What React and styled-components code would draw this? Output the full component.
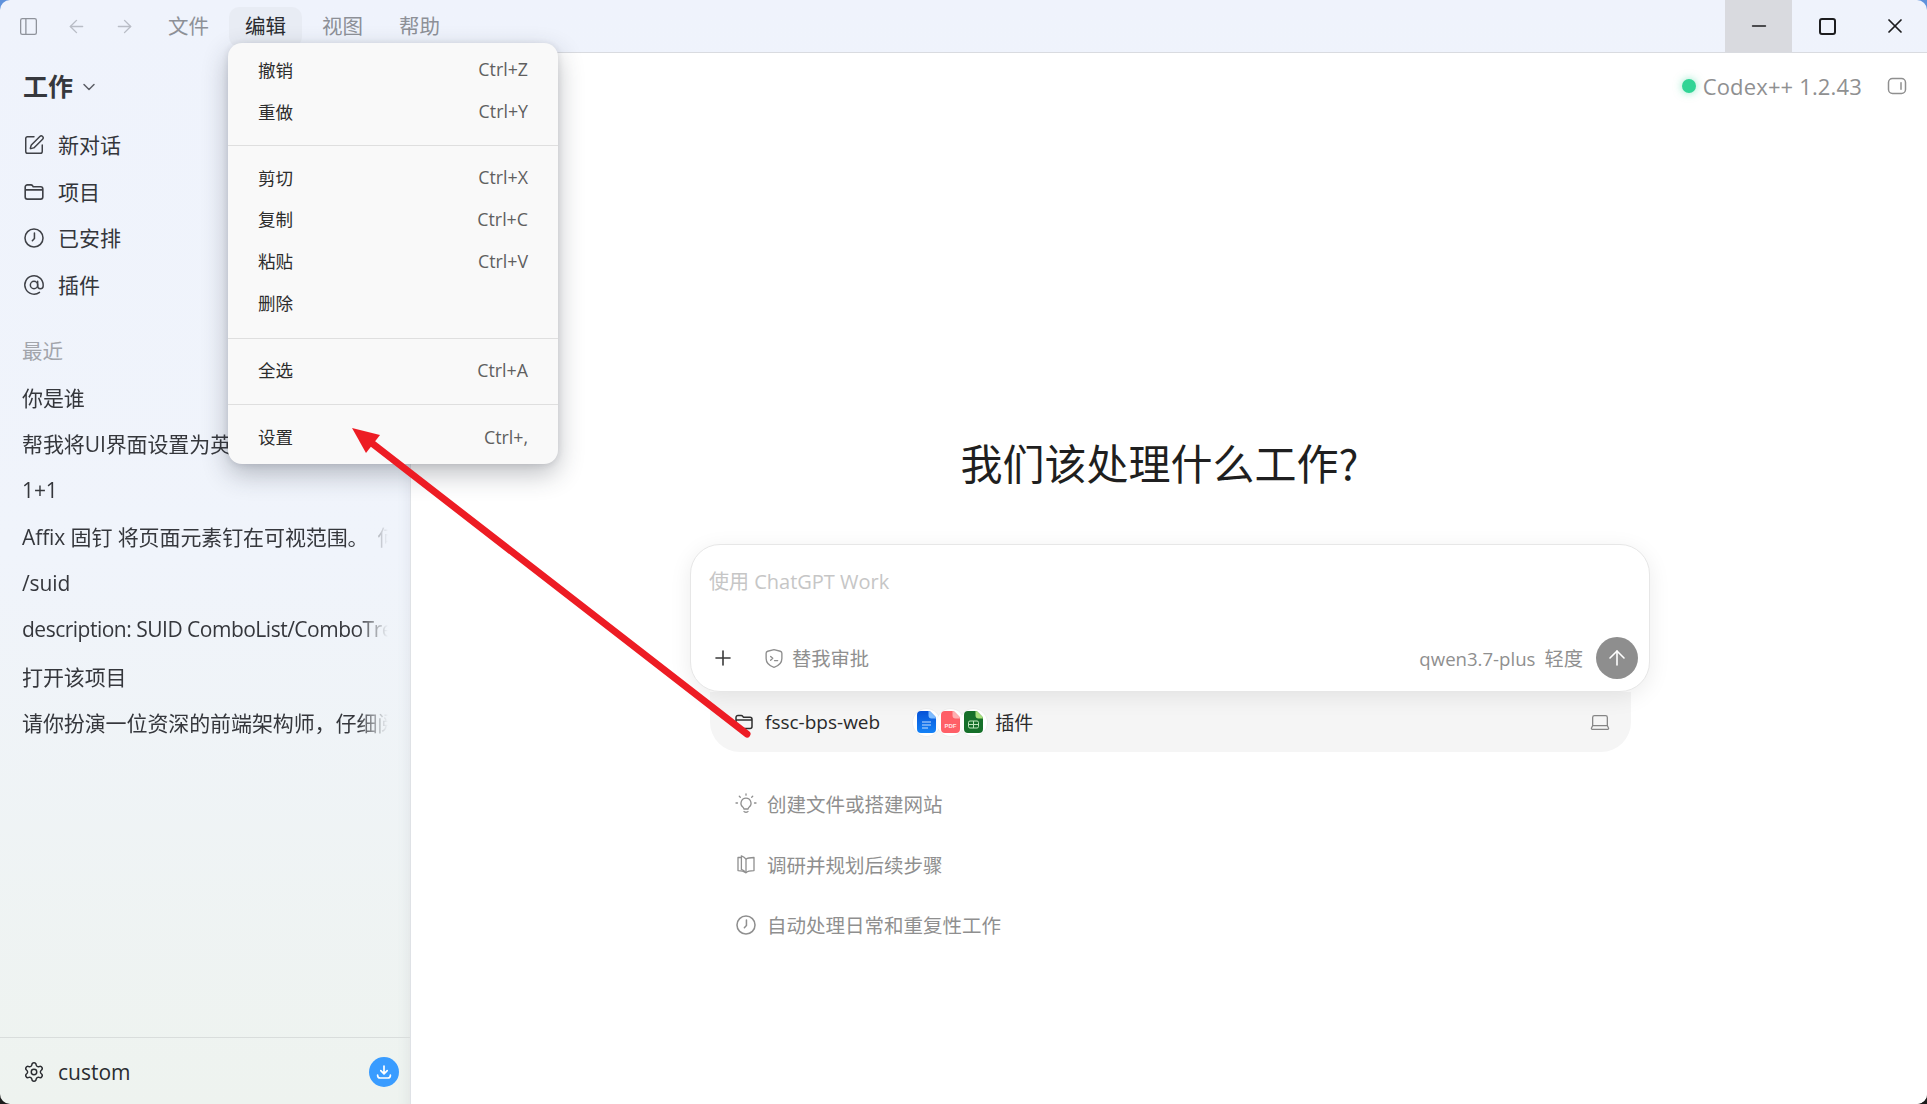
import React from 'react';
import styled, { createGlobalStyle } from 'styled-components';
import {
  ArrowLeft,
  ArrowRight,
  ArrowUp,
  AtSign,
  ChevronDown,
  Laptop,
  Minus,
  PanelLeft,
  Plus,
  Settings,
  SquarePen,
  X,
} from 'lucide-react';

const FONT = '"Open Sans", "Noto Sans CJK SC", sans-serif';

const GlobalStyle = createGlobalStyle`
  html, body, #root {
    margin: 0;
    padding: 0;
    height: 100%;
  }
  body {
    font-family: ${FONT};
    background: linear-gradient(180deg, #5f92dc 0, #5f92dc 50%, #1c1c1c 50%, #1c1c1c 100%);
    overflow: hidden;
  }
`;

// whole window, rounded corners let the desktop peek through
const Window = styled.div`
  position: relative;
  width: 100%;
  height: 100vh;
  display: flex;
  flex-direction: column;
  overflow: hidden;
  border-radius: 10px;
  background: linear-gradient(180deg, #eff3fc 0%, #f0f4fb 50%, #eef3ef 100%);
`;

const TitleBar = styled.div`
  height: 52px;
  flex-shrink: 0;
  display: flex;
  align-items: center;
`;

const BarIcon = styled.div`
  width: 48px;
  height: 52px;
  display: flex;
  align-items: center;
  justify-content: center;
  color: ${props => props.$color || '#b9bdc6'};
`;

const BarIcons = styled.div`
  display: flex;
  padding-left: 4px;
  margin-right: 4px;
`;

const MenuBar = styled.div`
  display: flex;
  gap: 4px;
  flex: 1;
`;

const MenuName = styled.div`
  width: 73px;
  height: 40px;
  margin-top: 2px;
  padding-bottom: 2px;
  box-sizing: border-box;
  border-radius: 10px;
  display: flex;
  align-items: center;
  justify-content: center;
  font-size: 20.5px;
  line-height: 28px;
  color: ${props => (props.$open ? '#2b2c30' : '#8d9097')};
  background: ${props => (props.$open ? '#e8ecf4' : 'transparent')};
`;

const WinButton = styled.div`
  width: ${props => props.$width || 67}px;
  height: 52px;
  margin-left: ${props => props.$gap || 0}px;
  display: flex;
  align-items: center;
  justify-content: center;
  color: #1d1d1f;
  background: ${props => (props.$hover ? '#d9dadf' : 'transparent')};
`;

const MaxGlyph = styled.div`
  width: 13px;
  height: 13px;
  border: 2px solid #1d1d1f;
  border-radius: 3px;
`;

const Body = styled.div`
  flex: 1;
  display: flex;
  min-height: 0;
`;

const Sidebar = styled.aside`
  width: 410px;
  flex-shrink: 0;
  display: flex;
  flex-direction: column;
  padding-top: 10px;
  box-sizing: border-box;
  box-shadow: inset -14px 0 14px -14px rgba(120, 130, 150, 0.14);
`;

const WorkHeader = styled.div`
  height: 46px;
  margin-bottom: 14px;
  padding-left: 23px;
  display: flex;
  align-items: center;
  gap: 6px;
  font-size: 25px;
  font-weight: 700;
  color: #36383d;

  svg {
    color: #5c5f66;
    margin-top: 3px;
  }
`;

const NavRow = styled.div`
  height: 46.5px;
  padding-left: 23px;
  display: flex;
  align-items: center;
  gap: 13px;
  font-size: 21px;
  color: #34363b;

  span {
    margin-top: -2px;
  }

  svg {
    flex-shrink: 0;
    color: #3f4147;
  }
`;

const RecentTitle = styled.div`
  height: 46.5px;
  margin-top: 19px;
  padding-left: 22px;
  display: flex;
  align-items: center;
  font-size: 20.5px;
  color: #a2a5ab;
`;

const RecentList = styled.div`
  flex: 1;
  min-height: 0;
`;

const RecentRow = styled.div`
  height: 46.5px;
  width: 388px;
  padding-left: 22px;
  box-sizing: border-box;
  display: flex;
  align-items: center;
  white-space: pre;
  overflow: hidden;
  font-size: 21px;
  letter-spacing: ${props => (props.$tight ? '-0.5px' : '-0.1px')};
  color: #35373c;
  -webkit-mask-image: linear-gradient(90deg, #000 358px, transparent 388px);
  mask-image: linear-gradient(90deg, #000 358px, transparent 388px);
`;

const SideFooter = styled.div`
  height: 67px;
  flex-shrink: 0;
  padding: 1px 11px 0 23px;
  border-top: 1px solid #d9dddc;
  box-sizing: border-box;
  display: flex;
  align-items: center;
  gap: 13px;
  font-size: 21px;
  color: #2a2c30;
`;

const FooterName = styled.span`
  flex: 1;
`;

const UpdateDot = styled.div`
  width: 30px;
  height: 30px;
  border-radius: 50%;
  background: #399cff;
  display: flex;
  align-items: center;
  justify-content: center;
`;

const Main = styled.main`
  flex: 1;
  min-width: 0;
  background: #fff;
  border-top: 1px solid #d9dbe0;
  border-left: 1px solid #dfe2e6;
  display: flex;
  flex-direction: column;
  align-items: center;
  padding-left: 2px;
  box-sizing: border-box;
`;

const VersionRow = styled.div`
  align-self: stretch;
  height: 66px;
  flex-shrink: 0;
  padding-right: 20px;
  display: flex;
  align-items: center;
  justify-content: flex-end;
  color: #8f9091;
`;

const GreenDot = styled.span`
  width: 14px;
  height: 14px;
  margin-right: 7px;
  border-radius: 50%;
  background: #31d495;
  box-shadow: 0 0 8px rgba(49, 212, 149, 0.55);
`;

const VersionText = styled.span`
  font-size: 22px;
  letter-spacing: 0.15px;
  margin-right: 25px;
`;

const Center = styled.div`
  width: 960px;
  margin-top: 313px;
`;

const Heading = styled.h1`
  margin: 0 21px 52px 0;
  height: 60px;
  text-align: center;
  font-family: "Noto Sans CJK SC", sans-serif;
  font-size: 42px;
  line-height: 60px;
  font-weight: 400;
  color: #1f1f20;
`;

const Composer = styled.div`
  position: relative;
  z-index: 1;
  height: 148px;
  padding: 0 11px 0 18px;
  box-sizing: border-box;
  display: flex;
  flex-direction: column;
  background: #fff;
  border: 1px solid #e7e7e7;
  border-radius: 30px;
  box-shadow: 0 5px 22px rgba(0, 0, 0, 0.08);
`;

const Placeholder = styled.div`
  height: 70px;
  display: flex;
  align-items: center;
  font-size: 20px;
  color: #c6c6c6;
`;

const ComposerBar = styled.div`
  flex: 1;
  display: flex;
  align-items: center;
  padding-top: 10px;
  color: #8f8f8f;
`;

const BarLabel = styled.span`
  font-size: 19.3px;
`;

const PlusSlot = styled.div`
  width: 26px;
  margin: 0 28px 0 1px;
  display: flex;
  justify-content: center;
  color: #3a3a3a;
`;

const ApproveIcon = styled.div`
  margin-right: 8px;
  display: flex;
`;

const Spacer = styled.div`
  flex: 1;
`;

const ModelName = styled.span`
  font-size: 18.6px;
  margin-right: 9px;
`;

const SendButton = styled.div`
  width: 42px;
  height: 42px;
  margin-left: 13px;
  border-radius: 50%;
  background: #8e8e8e;
  color: #fff;
  display: flex;
  align-items: center;
  justify-content: center;
`;

const Tray = styled.div`
  height: 60px;
  margin: 0 19px 0 20px;
  padding: 0 20px 0 24px;
  background: #f5f5f5;
  border-radius: 0 0 30px 30px;
  display: flex;
  align-items: center;
  font-size: 19px;
  color: #2a2a2a;
`;

const TrayFolder = styled.div`
  display: flex;
  margin-right: 11px;
`;

const AppBadges = styled.div`
  display: flex;
  margin: 0 8px 0 33px;
`;

const AppBadge = styled.div`
  width: 27px;
  height: 27px;
  margin-left: ${props => (props.$first ? 0 : -3.5)}px;
  border-radius: 50%;
  background: #fff;
  display: flex;
  align-items: center;
  justify-content: center;
  box-shadow: 0 0 0 1px rgba(0, 0, 0, 0.025);
`;

const LaptopSlot = styled.div`
  display: flex;
  color: #858585;
`;

const Suggestions = styled.div`
  margin-top: 21.5px;
  padding-left: 45px;
`;

const Suggestion = styled.div`
  height: 60.5px;
  display: flex;
  align-items: center;
  gap: 10px;
  font-size: 19.5px;
  color: #8f8f8f;

  svg {
    flex-shrink: 0;
  }
`;

// dropdown of the edit menu, floats over sidebar and main
const Dropdown = styled.div`
  position: absolute;
  left: 228px;
  top: 43px;
  width: 330px;
  z-index: 5;
  padding: 7px 0 5px;
  box-sizing: border-box;
  background: #f9f9f9;
  border-radius: 14px;
  box-shadow: 0 10px 26px rgba(40, 45, 60, 0.3), 0 1px 6px rgba(40, 45, 60, 0.12);
`;

const DropRow = styled.div`
  height: 41.7px;
  padding: 0 30px 3px 30px;
  box-sizing: border-box;
  display: flex;
  align-items: center;
  justify-content: space-between;
  font-size: 17.5px;
  color: #2d2d2d;
`;

const Shortcut = styled.span`
  font-size: 17.8px;
  color: #5f5f5f;
`;

const DropLine = styled.div`
  height: 1px;
  margin: ${props => props.$top}px 0 12px;
  background: #dfdfdf;
`;

const ArrowLayer = styled.svg`
  position: absolute;
  inset: 0;
  width: 100%;
  height: 100%;
  z-index: 6;
  pointer-events: none;
`;

const recents = [
  { text: '你是谁' },
  { text: '帮我将UI界面设置为英文' },
  { text: '1+1' },
  { text: 'Affix 固钉 将页面元素钉在可视范围。\u2009 何时使用' },
  { text: '/suid' },
  { text: 'description: SUID ComboList/ComboTree', tight: true },
  { text: '打开该项目' },
  { text: '请你扮演一位资深的前端架构师，仔细阅读' },
];

const editMenu = [
  { top: 0, rows: [['撤销', 'Ctrl+Z'], ['重做', 'Ctrl+Y']] },
  { top: 11.5, rows: [['剪切', 'Ctrl+X'], ['复制', 'Ctrl+C'], ['粘贴', 'Ctrl+V'], ['删除', '']] },
  { top: 13, rows: [['全选', 'Ctrl+A']] },
  { top: 12, rows: [['设置', 'Ctrl+,']] },
];

function FolderIcon({ color, size = 22 }) {
  return (
    <svg width={size} height={size} viewBox="0 0 20 20" fill="none" stroke={color} strokeWidth="1.5" strokeLinejoin="round">
      <path d="M2 5.500a2 2 0 0 1 2-2h3.200c.7 0 1.200.3 1.600.9l.5.8h6.700a2 2 0 0 1 2 2v7.300a2 2 0 0 1-2 2H4a2 2 0 0 1-2-2z" />
      <path d="M2 8h16" />
    </svg>
  );
}

function ClockIcon({ color, size = 22 }) {
  return (
    <svg width={size} height={size} viewBox="0 0 20 20" fill="none" stroke={color} strokeWidth="1.4" strokeLinecap="round">
      <circle cx="10" cy="10" r="8.200" />
      <path d="M10.400 5.400v5l-1.900 2.100" />
    </svg>
  );
}

function ShieldIcon() {
  return (
    <svg width="20" height="21" viewBox="0 0 19 20" fill="none" stroke="#8f8f8f" strokeWidth="1.300" strokeLinecap="round" strokeLinejoin="round">
      <path d="M9.500 1.500l6 1.600c1 .3 1.500 1 1.500 2v5c0 4.200-3 6.900-7.500 8.400C5 17 2 14.300 2 10.100v-5c0-1 .5-1.700 1.500-2z" />
      <path d="M6.300 8l2 1.800-2 1.800M10 12h3" />
    </svg>
  );
}

function BulbIcon() {
  return (
    <svg width="22" height="22" viewBox="0 0 22 22" fill="none" stroke="#8f8f8f" strokeWidth="1.300" strokeLinecap="round" strokeLinejoin="round">
      <path d="M11 5.200a5 5 0 0 0-3 9c.6.5.8 1 .9 1.800h4.200c.1-.8.3-1.300.9-1.800a5 5 0 0 0-3-9z" />
      <path d="M9 18.500c.4 1 3.600 1 4 0" />
      <path d="M11 .8v1.400M4.300 3.200l1 1M17.700 3.200l-1 1M1 10h1.500M19.500 10H21" />
    </svg>
  );
}

function BookIcon() {
  return (
    <svg width="22" height="22" viewBox="0 0 22 22" fill="none" stroke="#8f8f8f" strokeWidth="1.300" strokeLinejoin="round">
      <path d="M11 6.200C9.800 4.400 8.300 3.400 6.400 2.800v13.600c1.900.6 3.400 1.700 4.600 3.400 1.400-1.500 3.800-2.200 8-2.200V4.500c-4.200 0-6.600.5-8 1.700z" />
      <path d="M11 6.200v13.600" />
      <path d="M6.400 4.500H3v13.100c3 0 6 .6 8 2.200" />
    </svg>
  );
}

function DownloadGlyph() {
  return (
    <svg width="18" height="18" viewBox="0 0 18 18" fill="none" stroke="#fff" strokeWidth="1.700" strokeLinecap="round" strokeLinejoin="round">
      <path d="M9 3v7.500M5.800 7.600L9 10.800l3.200-3.200" />
      <path d="M2.600 12.200c0 1.700 1.100 2.800 2.700 2.800h7.400c1.600 0 2.700-1.100 2.700-2.800" />
    </svg>
  );
}

function PanelRightIcon() {
  return (
    <svg width="20" height="20" viewBox="0 0 20 20" fill="none" stroke="#8f8f8f" strokeWidth="1.500" strokeLinecap="round">
      <rect x="1.500" y="2.500" width="17" height="15" rx="4" />
      <path d="M14 6.800v6.400" />
    </svg>
  );
}

const PAGE = 'M4 0h7.500c.8 0 1.500.3 2 .8l4.700 4.700c.5.500.8 1.200.8 2V18a4 4 0 0 1-4 4H4a4 4 0 0 1-4-4V4a4 4 0 0 1 4-4z';
const FOLD = 'M11.500 0c.8 0 1.500.3 2 .8l4.700 4.700c.5.500.8 1.200.8 2h-4.500a3 3 0 0 1-3-3z';

function DocBadge() {
  return (
    <svg width="19" height="22" viewBox="0 0 19 22">
      <defs>
        <linearGradient id="docFill" x1="0" y1="0" x2="0" y2="1">
          <stop offset="0" stopColor="#0653d8" />
          <stop offset="1" stopColor="#1482f6" />
        </linearGradient>
      </defs>
      <path d={PAGE} fill="url(#docFill)" />
      <path d={FOLD} fill="#7fbcff" />
      <path d="M5 11h9M5 14h9M5 17h6" stroke="#c6e0ff" strokeWidth="1.200" />
    </svg>
  );
}

function PdfBadge() {
  return (
    <svg width="19" height="22" viewBox="0 0 19 22">
      <path d={PAGE} fill="#ff5f67" />
      <path d={FOLD} fill="#ffb0b2" />
      <text x="9.500" y="17" fontSize="6" fontWeight="700" fontFamily="Liberation Sans, sans-serif" fill="#ffe3e3" textAnchor="middle">PDF</text>
    </svg>
  );
}

function SheetBadge() {
  return (
    <svg width="19" height="22" viewBox="0 0 19 22">
      <path d={PAGE} fill="#16702a" />
      <path d={FOLD} fill="#a9e07f" />
      <rect x="4.500" y="10" width="10" height="7" rx="1.500" fill="none" stroke="#bfe6bd" strokeWidth="1" />
      <path d="M9.500 10v7M4.500 13.500h10" stroke="#bfe6bd" strokeWidth="1" />
    </svg>
  );
}

export default function App() {
  return (
    <>
      <GlobalStyle />
      <Window>
        <TitleBar>
          <BarIcons>
            <BarIcon $color="#8f939b"><PanelLeft size={21} strokeWidth={1.5} /></BarIcon>
            <BarIcon><ArrowLeft size={21} strokeWidth={1.6} /></BarIcon>
            <BarIcon><ArrowRight size={21} strokeWidth={1.6} /></BarIcon>
          </BarIcons>
          <MenuBar>
            <MenuName>文件</MenuName>
            <MenuName $open>编辑</MenuName>
            <MenuName>视图</MenuName>
            <MenuName>帮助</MenuName>
          </MenuBar>
          <WinButton $hover><Minus size={22} strokeWidth={1.7} /></WinButton>
          <WinButton $gap={2}><MaxGlyph /></WinButton>
          <WinButton $gap={2} $width={64}><X size={24} strokeWidth={1.7} /></WinButton>
        </TitleBar>

        <Body>
          <Sidebar>
            <WorkHeader>工作<ChevronDown size={20} strokeWidth={1.8} /></WorkHeader>
            <NavRow><SquarePen size={22} strokeWidth={1.6} /><span>新对话</span></NavRow>
            <NavRow><FolderIcon color="#3f4147" /><span>项目</span></NavRow>
            <NavRow><ClockIcon color="#3f4147" /><span>已安排</span></NavRow>
            <NavRow><AtSign size={22} strokeWidth={1.6} /><span>插件</span></NavRow>
            <RecentTitle>最近</RecentTitle>
            <RecentList>
              {recents.map(item => (
                <RecentRow key={item.text} $tight={item.tight}>{item.text}</RecentRow>
              ))}
            </RecentList>
            <SideFooter>
              <Settings size={22} strokeWidth={1.6} />
              <FooterName>custom</FooterName>
              <UpdateDot><DownloadGlyph /></UpdateDot>
            </SideFooter>
          </Sidebar>

          <Main>
            <VersionRow>
              <GreenDot />
              <VersionText>Codex++ 1.2.43</VersionText>
              <PanelRightIcon />
            </VersionRow>
            <Center>
              <Heading>我们该处理什么工作?</Heading>
              <Composer>
                <Placeholder>使用 ChatGPT Work</Placeholder>
                <ComposerBar>
                  <PlusSlot><Plus size={24} strokeWidth={1.6} /></PlusSlot>
                  <ApproveIcon><ShieldIcon /></ApproveIcon>
                  <BarLabel>替我审批</BarLabel>
                  <Spacer />
                  <ModelName>qwen3.7-plus</ModelName>
                  <BarLabel>轻度</BarLabel>
                  <SendButton><ArrowUp size={24} strokeWidth={1.6} /></SendButton>
                </ComposerBar>
              </Composer>
              <Tray>
                <TrayFolder><FolderIcon color="#2f2f2f" size={20} /></TrayFolder>
                fssc-bps-web
                <AppBadges>
                  <AppBadge $first><DocBadge /></AppBadge>
                  <AppBadge><PdfBadge /></AppBadge>
                  <AppBadge><SheetBadge /></AppBadge>
                </AppBadges>
                插件
                <Spacer />
                <LaptopSlot><Laptop size={22} strokeWidth={1.4} /></LaptopSlot>
              </Tray>
              <Suggestions>
                <Suggestion><BulbIcon />创建文件或搭建网站</Suggestion>
                <Suggestion><BookIcon />调研并规划后续步骤</Suggestion>
                <Suggestion><ClockIcon color="#8f8f8f" />自动处理日常和重复性工作</Suggestion>
              </Suggestions>
            </Center>
          </Main>
        </Body>

        <Dropdown>
          {editMenu.map((group, i) => (
            <React.Fragment key={i}>
              {i > 0 && <DropLine $top={group.top} />}
              {group.rows.map(([name, keys]) => (
                <DropRow key={name}>{name}<Shortcut>{keys}</Shortcut></DropRow>
              ))}
            </React.Fragment>
          ))}
        </Dropdown>

        <ArrowLayer viewBox="0 0 1927 1104">
          <path d="M373 444L747 734" stroke="#ed1c24" strokeWidth="7" strokeLinecap="round" />
          <polygon points="352,428 380,435 366,453" fill="#ed1c24" />
        </ArrowLayer>
      </Window>
    </>
  );
}
